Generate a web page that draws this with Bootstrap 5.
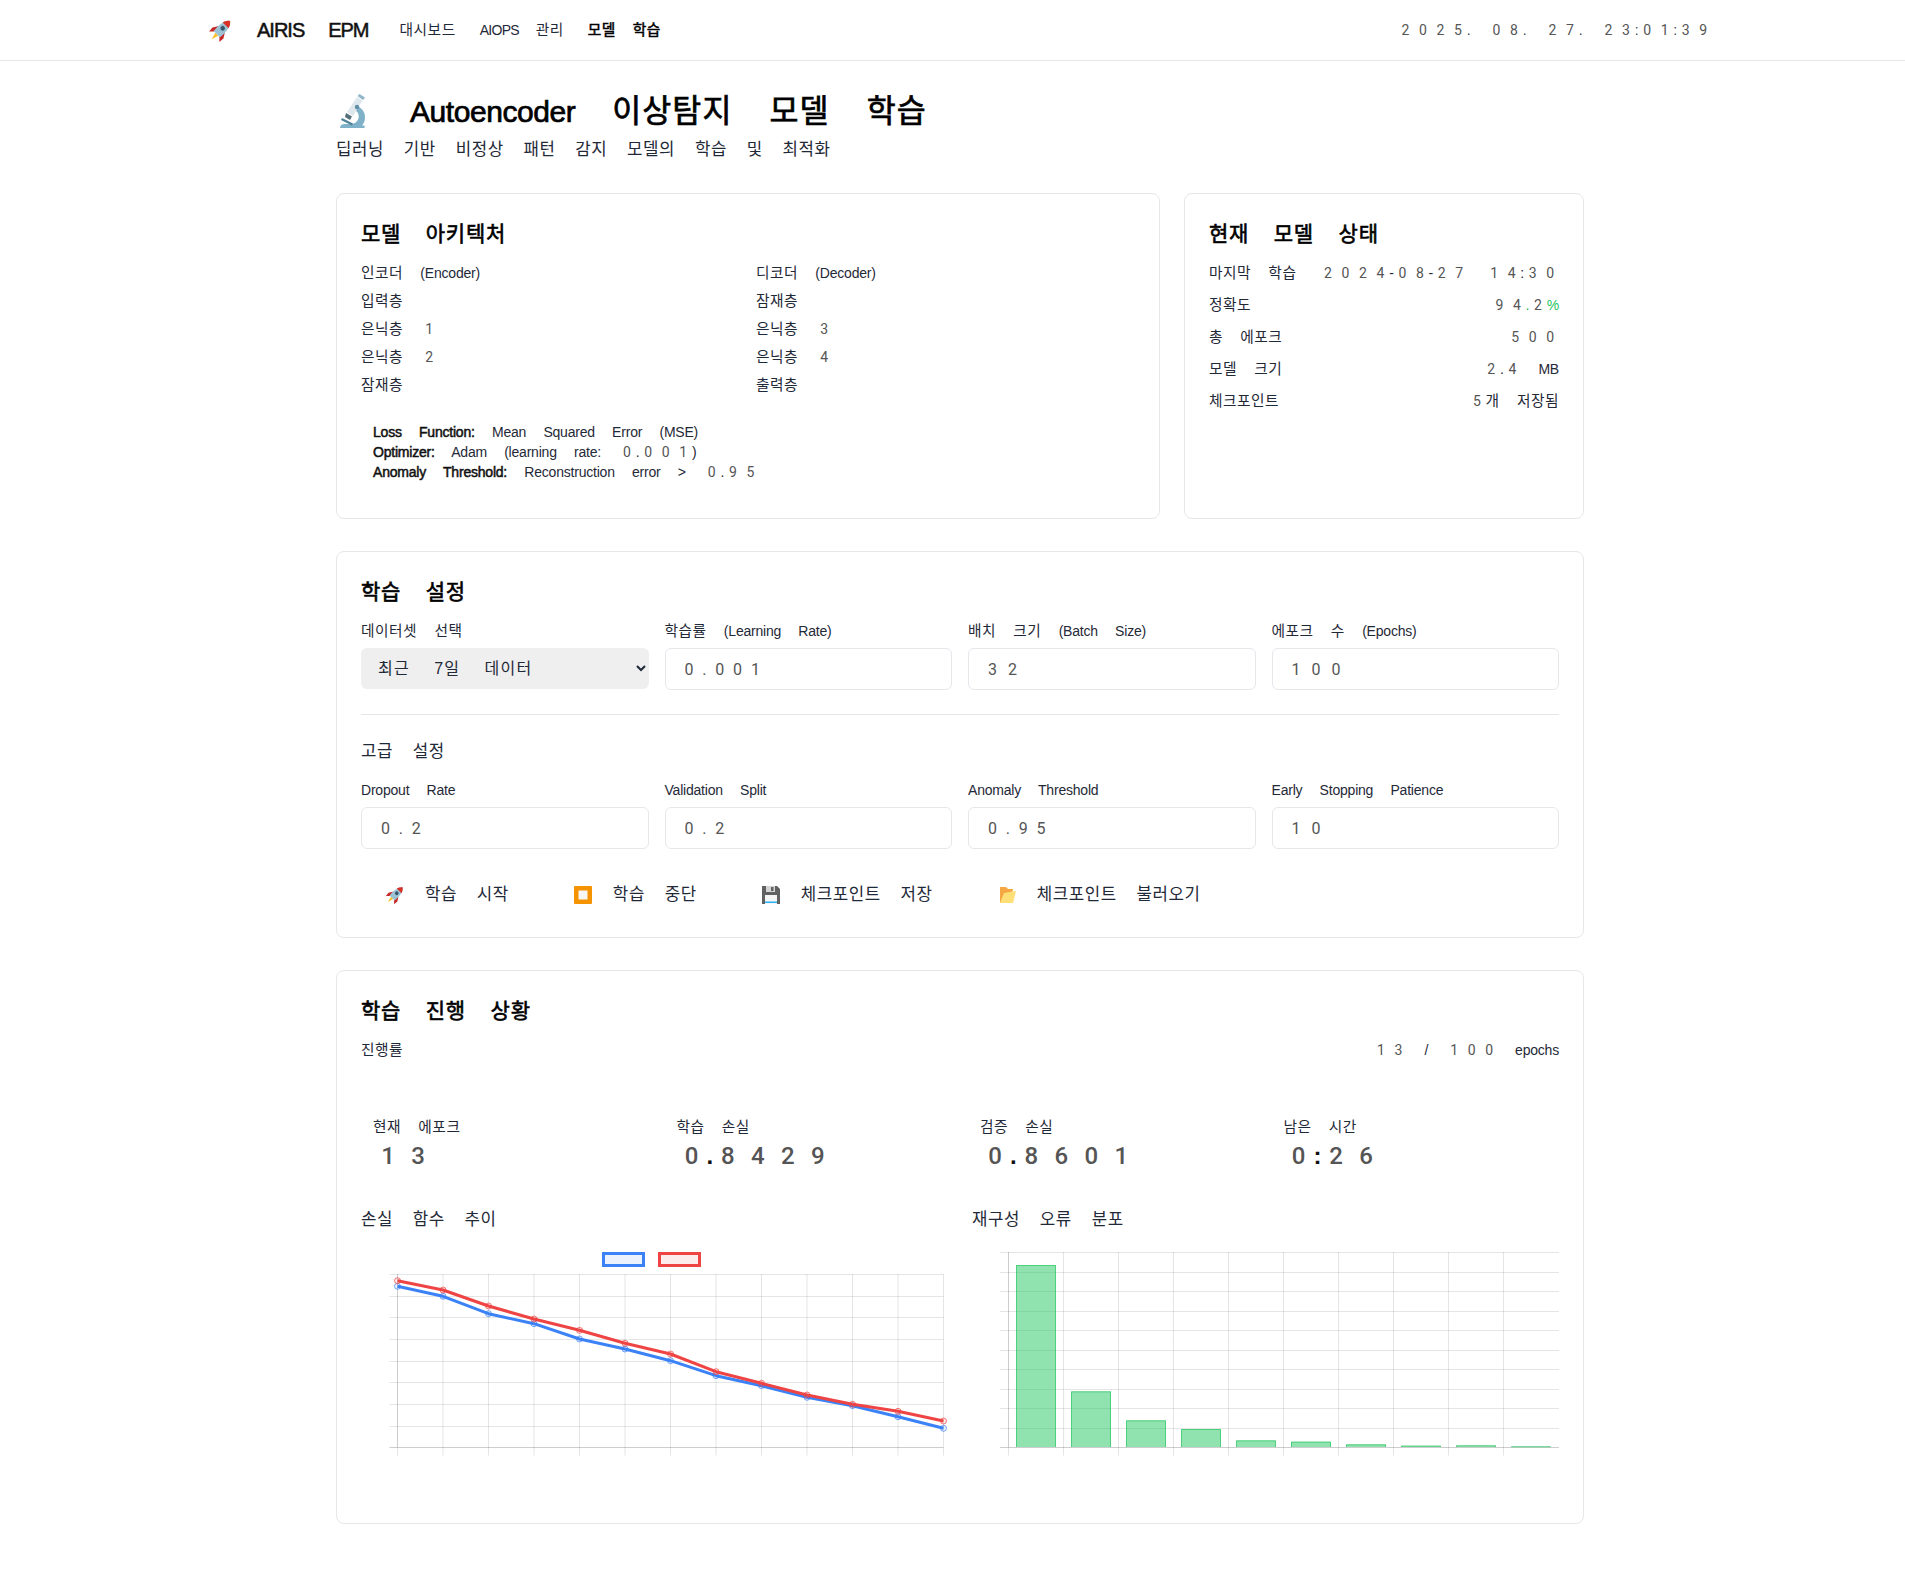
<!DOCTYPE html>
<html lang="ko">
  <head>
    <meta charset="UTF-8" />
    <meta name="viewport" content="width=device-width, initial-scale=1.0" />
    <title>Autoencoder 이상탐지 모델 학습</title>
    <link rel="stylesheet" href="https://cdn.jsdelivr.net/npm/bootstrap@5.3.0/dist/css/bootstrap.min.css" />
    <style>
      body { font-family: "Liberation Sans", "Noto Sans CJK KR", sans-serif; font-size: 14px; line-height: 20px; color: #1f2937; overflow-x: hidden; }
      body * { word-spacing: .97em; letter-spacing: -.015em; }
      .page-wrap { width: 1920px; }
      .top-nav { height: 61px; border-bottom: 1px solid #e5e7eb; }
      .top-inner { width: 1536px; padding: 0 16px; }
      .brand-name { font-size: 20px; line-height: 28px; color: #111; margin-right: 31px; letter-spacing: -.05em; }
      .faux { font-weight: 400; -webkit-text-stroke: .5px currentColor; }
      .top-link { color: #1f2937; text-decoration: none; letter-spacing: -.05em; }
      .top-link.on { color: #000; }
      .clock { color: #374151; white-space: nowrap; }
      .main-wrap { width: 1280px; padding: 32px 16px 64px; }
      h1.title { font-size: 30px; line-height: 36px; color: #000; margin: 0 0 8px; letter-spacing: 0; -webkit-text-stroke-width: .7px; }
      .title-icon { margin-right: 38px; flex: none; }
      .sub { font-size: 16px; line-height: 24px; color: #1f2937; margin: 0 0 31px; }
      .panel { border: 1px solid #e5e7eb; border-radius: 8px; padding: 24px; background: #fff; }
      .panel-title { font-size: 20px; line-height: 28px; color: #000; padding-top: 2px; margin: 0 0 15px; -webkit-text-stroke-width: .6px; }
      .arch-row { margin-bottom: 8px; }
      .arch-row:last-child { margin-bottom: 0; }
      .info-box { margin-top: 15px; padding: 12px; color: #1f2937; }
      .info-box b { color: #111; }
      .stat-row { margin-bottom: 12px; white-space: nowrap; }
      .field-label { display: block; margin-bottom: 7px; color: #1f2937; }
      .form-control.num-input { height: 42px; border-color: #e5e7eb; border-radius: 6px; padding-left: 19px; font-family: Roboto, sans-serif; font-size: 16px; letter-spacing: .69em; color: #555; }
      .form-control.num-input.frac { letter-spacing: .55em; }
      .form-select.plain-select { height: 41px; border: 0; border-radius: 6px; background-color: #efefef; background-image: none; appearance: auto; padding: 0 4px 0 13px; font-size: 16px; color: #1f2937; letter-spacing: .08em; word-spacing: 1.15em; }
      .sub-title { font-size: 16px; line-height: 24px; margin: 0 0 16px; color: #1f2937; }
      .sub-title.tight { margin-bottom: 5px; }
      hr.split { margin: 24px 0 25px; border-color: #e5e7eb; opacity: 1; }
      .act-row { margin-top: 26px; margin-bottom: -2px; }
      .act-btn { padding: 8px 24px; border: 0; font-size: 16px; line-height: 24px; color: #1f2937; background: transparent; display: inline-flex; align-items: center; }
      .act-icon { width: 20px; height: 20px; margin-right: 20px; flex: none; }
      .stat-box { padding: 12px; }
      .stat-val { font-size: 24px; line-height: 32px; margin-top: 3px; color: #111; font-weight: 700; }
      .chart-row { margin-top: 24px; }
      .chart-box svg { display: block; }
      /* digits come out grey and wide, hangul a bit wider than the installed font */
      .dg { display: inline-block; width: 1.25em; text-align: center; font-family: Roboto, sans-serif; font-weight: 400; color: #555; letter-spacing: 0; -webkit-text-stroke: 0; }
      .hg { font-size: 1.05em; letter-spacing: .035em; }
      .stat-val .dg { font-weight: 500; }
      .pct { color: #22c55e; }
      .gap-stats { margin-bottom: 45px; white-space: nowrap; }
      .gap-block { margin-bottom: 32px; }
    </style>
  </head>
  <body>
    <div class="page-wrap">
      <nav class="top-nav">
        <div class="top-inner mx-auto h-100 d-flex align-items-center justify-content-between">
          <div class="d-flex align-items-center">
            <svg width="25" height="25" viewBox="0 0 24 24" class="me-4">
              <use href="#rocketIcon" />
            </svg>
            <span class="brand-name faux">AIRIS EPM</span>
            <div class="d-flex gap-4">
              <a href="#" class="top-link">대시보드</a>
              <a href="#" class="top-link">AIOPS 관리</a>
              <a href="#" class="top-link on faux">모델 학습</a>
            </div>
          </div>
          <span class="clock">2025. 08. 27. 23:01:39</span>
        </div>
      </nav>

      <svg width="0" height="0" class="d-block">
        <symbol id="rocketIcon" viewBox="0 0 24 24">
          <g transform="rotate(45 12 12)">
            <path d="M10 17h4l-2 7z" fill="#fbc02d" />
            <path d="M8 10l-3.500 5.500.5 5 3.500-3.500zM16 10l3.500 5.500-.5 5-3.500-3.500z" fill="#c62828" />
            <path d="M12 -1c3.800 3 5 8 4.300 18H7.700C7 7 8.200 2 12 -1z" fill="#9cc2d5" />
            <path d="M12 -1c2 1.600 3.300 3.500 4 6H8c.7-2.500 2-4.400 4-6z" fill="#d93025" />
            <circle cx="12" cy="9" r="2.200" fill="#37566a" />
          </g>
        </symbol>
      </svg>

      <main class="main-wrap mx-auto">
        <h1 class="title faux d-flex align-items-center">
          <svg width="36" height="36" viewBox="0 0 36 36" class="title-icon">
            <path d="M4 34c0-2.500 2-4 5-4h7c5-1 7.500-5 6.500-9.500-.5-2-2-3.500-3.500-4.500l2.500-4c5 2.500 7.500 6.500 7.500 11 0 3.500-1 6.500-3 8.500h2.500v2.500z" fill="#7fb2c8" />
            <path d="M11 18L21 3l5.500 3.500L17 22z" fill="#dde7ec" />
            <path d="M21.500 2l2-2 5.500 3.500-2 2.500z" fill="#8fb6c9" />
            <path d="M6 24l11 5.500-1 2L5 26z" fill="#4f8299" />
            <path d="M10 19l6 3.500-2 3.500-5-3z" fill="#546e7a" />
            <circle cx="21" cy="13" r="2.200" fill="#5f8ea5" />
          </svg>
          <span>Autoencoder 이상탐지 모델 학습</span>
        </h1>
        <p class="sub">딥러닝 기반 비정상 패턴 감지 모델의 학습 및 최적화</p>

        <div class="row gx-4 gap-block">
          <div class="col-8 d-flex">
            <section class="panel w-100">
              <h2 class="panel-title faux">모델 아키텍처</h2>
              <div class="row gx-3">
                <div class="col-6">
                  <div class="arch-row">인코더 (Encoder)</div>
                  <div class="arch-row">입력층</div>
                  <div class="arch-row">은닉층 1</div>
                  <div class="arch-row">은닉층 2</div>
                  <div class="arch-row">잠재층</div>
                </div>
                <div class="col-6">
                  <div class="arch-row">디코더 (Decoder)</div>
                  <div class="arch-row">잠재층</div>
                  <div class="arch-row">은닉층 3</div>
                  <div class="arch-row">은닉층 4</div>
                  <div class="arch-row">출력층</div>
                </div>
              </div>
              <div class="info-box">
                <div><b class="faux">Loss Function:</b> Mean Squared Error (MSE)</div>
                <div><b class="faux">Optimizer:</b> Adam (learning rate: 0.001)</div>
                <div><b class="faux">Anomaly Threshold:</b> Reconstruction error &gt; 0.95</div>
              </div>
            </section>
          </div>
          <div class="col-4 d-flex">
            <section class="panel w-100">
              <h2 class="panel-title faux">현재 모델 상태</h2>
              <div class="stat-row d-flex justify-content-between"><span>마지막 학습</span><span>2024-08-27 14:30</span></div>
              <div class="stat-row d-flex justify-content-between"><span>정확도</span><span class="pct">94.2%</span></div>
              <div class="stat-row d-flex justify-content-between"><span>총 에포크</span><span>500</span></div>
              <div class="stat-row d-flex justify-content-between"><span>모델 크기</span><span>2.4 MB</span></div>
              <div class="stat-row d-flex justify-content-between"><span>체크포인트</span><span>5개 저장됨</span></div>
            </section>
          </div>
        </div>

        <section class="panel gap-block">
          <h2 class="panel-title faux">학습 설정</h2>
          <div class="row gx-3">
            <div class="col-3">
              <label class="field-label">데이터셋 선택</label>
              <select class="form-select plain-select"><option>최근 7일 데이터</option><option>최근 30일 데이터</option></select>
            </div>
            <div class="col-3"><label class="field-label">학습률 (Learning Rate)</label><input class="form-control num-input frac" value="0.001" /></div>
            <div class="col-3"><label class="field-label">배치 크기 (Batch Size)</label><input class="form-control num-input" value="32" /></div>
            <div class="col-3"><label class="field-label">에포크 수 (Epochs)</label><input class="form-control num-input" value="100" /></div>
          </div>
          <hr class="split" />
          <h3 class="sub-title fw-normal">고급 설정</h3>
          <div class="row gx-3">
            <div class="col-3"><label class="field-label">Dropout Rate</label><input class="form-control num-input frac" value="0.2" /></div>
            <div class="col-3"><label class="field-label">Validation Split</label><input class="form-control num-input frac" value="0.2" /></div>
            <div class="col-3"><label class="field-label">Anomaly Threshold</label><input class="form-control num-input frac" value="0.95" /></div>
            <div class="col-3"><label class="field-label">Early Stopping Patience</label><input class="form-control num-input" value="10" /></div>
          </div>
          <div class="d-flex gap-3 act-row">
            <button class="btn act-btn">
              <svg class="act-icon" viewBox="0 0 24 24"><use href="#rocketIcon" /></svg><span>학습 시작</span>
            </button>
            <button class="btn act-btn">
              <svg class="act-icon" viewBox="0 0 20 20"><rect x="1" y="1" width="18" height="18" rx="1" fill="#f59300" /><rect x="5.500" y="5.500" width="9" height="9" fill="#f7f7f7" /></svg><span>학습 중단</span>
            </button>
            <button class="btn act-btn">
              <svg class="act-icon" viewBox="0 0 20 20">
                <path d="M1 1h15l3 3v15H1z" fill="#616161" />
                <rect x="5" y="1" width="9" height="6" fill="#d5d5d5" />
                <rect x="10" y="2" width="2.500" height="4" fill="#616161" />
                <rect x="4" y="10" width="12" height="9" fill="#f5f5f5" />
                <rect x="4" y="16.500" width="12" height="1.500" fill="#29b6f6" />
              </svg><span>체크포인트 저장</span>
            </button>
            <button class="btn act-btn">
              <svg class="act-icon" viewBox="0 0 20 20">
                <path d="M3 2h6l2 2h5l-1 5-10 9H3z" fill="#f4a742" />
                <path d="M3 18L7 8l12-2-3 12z" fill="#ffdf78" />
              </svg><span>체크포인트 불러오기</span>
            </button>
          </div>
        </section>

        <section class="panel">
          <h2 class="panel-title faux">학습 진행 상황</h2>
          <div class="d-flex justify-content-between gap-stats"><span>진행률</span><span>13 / 100 epochs</span></div>
          <div class="row gx-3">
            <div class="col-3"><div class="stat-box"><div>현재 에포크</div><div class="stat-val">13</div></div></div>
            <div class="col-3"><div class="stat-box"><div>학습 손실</div><div class="stat-val">0.8429</div></div></div>
            <div class="col-3"><div class="stat-box"><div>검증 손실</div><div class="stat-val">0.8601</div></div></div>
            <div class="col-3"><div class="stat-box"><div>남은 시간</div><div class="stat-val">0:26</div></div></div>
          </div>
          <div class="row gx-4 chart-row">
            <div class="col-6 chart-box">
              <h3 class="sub-title tight fw-normal">손실 함수 추이</h3>
              <div id="lossChart"></div>
            </div>
            <div class="col-6 chart-box">
              <h3 class="sub-title tight fw-normal">재구성 오류 분포</h3>
              <div id="errorChart"></div>
            </div>
          </div>
        </section>
      </main>
    </div>

    <script src="https://cdn.jsdelivr.net/npm/bootstrap@5.3.0/dist/js/bootstrap.bundle.min.js"></script>
    <script>
      // wrap digits and hangul runs so they get their own metrics
      function wrapRuns(node) {
        if (node.nodeType === 3) {
          if (!/[\d가-힣]/.test(node.nodeValue)) return;
          const tmp = document.createElement("span");
          tmp.innerHTML = node.nodeValue
            .replace(/&/g, "&amp;")
            .replace(/</g, "&lt;")
            .replace(/\d/g, '<span class="dg">$&</span>')
            .replace(/[가-힣]+/g, '<span class="hg">$&</span>');
          node.replaceWith(...tmp.childNodes);
        } else if (!["SCRIPT", "STYLE", "SELECT", "svg", "TITLE"].includes(node.nodeName)) {
          [...node.childNodes].forEach(wrapRuns);
        }
      }
      wrapRuns(document.body);

      const gridLine = (x1, y1, x2, y2) =>
        `<line x1="${x1}" y1="${y1}" x2="${x2}" y2="${y2}" stroke="#000" stroke-opacity=".1" />`;

      // loss chart
      const blue = [172, 202, 254, 284, 330, 360, 395, 440, 470, 505, 530, 563, 598];
      const red = [155, 183, 231, 270, 304, 343, 375, 428, 463, 498, 526, 547, 576];
      const lx = (i) => 36.5 + i * 45.5;
      const ly = (z) => (z / 3 - 8).toFixed(1);
      let loss = "";
      for (let i = 0; i < 13; i++) loss += gridLine(lx(i), 37, lx(i), 218.5);
      for (let i = 0; i <= 8; i++) {
        const y = Math.round(37 + i * 21.67) + 0.5;
        loss += gridLine(28.5, y, 582.5, y);
      }
      loss += gridLine(36.5, 37, 36.5, 210) + gridLine(28.5, 210.5, 582.5, 210.5);
      loss += `<rect x="242.5" y="16.500" width="40" height="12" fill="#3b82f6" fill-opacity=".1" stroke="#3b82f6" stroke-width="3" />`;
      loss += `<rect x="298.5" y="16.500" width="40" height="12" fill="#ef4444" fill-opacity=".1" stroke="#ef4444" stroke-width="3" />`;
      [[blue, "#3b82f6"], [red, "#ef4444"]].forEach(([data, color]) => {
        const pts = data.map((z, i) => `${lx(i)},${ly(z)}`).join(" ");
        loss += `<polyline points="${pts}" fill="none" stroke="${color}" stroke-width="3" stroke-linejoin="round" />`;
        data.forEach((z, i) => {
          loss += `<circle cx="${lx(i)}" cy="${ly(z)}" r="3" fill="${color}" fill-opacity=".1" stroke="${color}" stroke-opacity=".7" />`;
        });
      });
      document.getElementById("lossChart").innerHTML = `<svg width="587" height="262">${loss}</svg>`;

      // error histogram
      const tops = [108, 487, 574, 600, 634, 638, 646, 650, 649, 652];
      let err = "";
      for (let i = 0; i < 10; i++) {
        const x = Math.round(36 + i * 55) + 0.5;
        err += gridLine(x, 15, x, 218.5);
      }
      for (let i = 0; i <= 10; i++) {
        const y = Math.round(15 + i * 19.5) + 0.5;
        err += gridLine(28, y, 587, y);
      }
      err += gridLine(36.5, 15, 36.5, 210) + gridLine(28, 210.5, 587, 210.5);
      tops.forEach((z, i) => {
        const y = z / 3 - 8;
        const x = 44 + i * 55;
        err += `<rect x="${x}" y="${y}" width="40" height="${210 - y}" fill="#22c55e" fill-opacity=".5" />`;
        err += `<path d="M${x + 0.5} 210V${y + 0.5}H${x + 39.5}V210" fill="none" stroke="#22c55e" stroke-opacity=".6" />`;
      });
      document.getElementById("errorChart").innerHTML = `<svg width="587" height="262">${err}</svg>`;
    </script>
  </body>
</html>
